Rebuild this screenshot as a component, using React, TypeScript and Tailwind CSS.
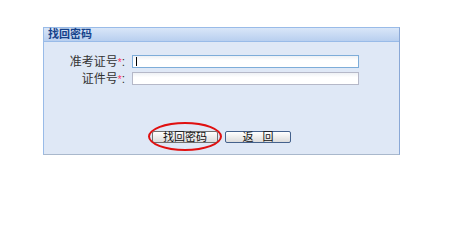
import React from 'react';

const font = { fontFamily: '"Liberation Sans", "Noto Sans CJK SC", sans-serif' };

const Field = ({ label, focused }: { label: string; focused?: boolean }) => (
  <div className="flex items-center h-[13px]">
    <div className="w-[81px] text-right text-[12px] leading-none text-[#333] whitespace-nowrap">
      {label}
      <span className="text-[#ff3366] text-[10px]">*</span>:
    </div>
    <div
      className={`ml-[7px] w-[227px] h-[13px] bg-white bg-gradient-to-b from-[#eef1f5] to-white to-[40%] border ${
        focused ? 'border-[#7eadd9]' : 'border-[#b5b8c8]'
      } flex items-center pl-[3px]`}
    >
      {focused && <span className="w-px h-[9px] bg-black" />}
    </div>
  </div>
);

const Button = ({ children, blue }: { children: React.ReactNode; blue?: boolean }) => (
  <button
    className={`w-[66px] h-[12px] rounded-[2px] border ${
      blue ? 'border-[#44618c]' : 'border-[#707070]'
    } bg-gradient-to-b from-white to-[#dcdcdc] text-[11px] leading-none text-[#111] flex items-center justify-center`}
  >
    {children}
  </button>
);

export default function App() {
  return (
    <div className="bg-white w-[449px] h-[201px] pt-[27px] pl-[43px]" style={font}>
      <div className="w-[357px] h-[128px] border border-[#99bbe8] border-r-[#8aa8d6] border-b-[#a9b8cc] bg-[#dfe8f6] flex flex-col">
        <div className="h-[14px] shrink-0 bg-gradient-to-b from-[#d9e6f8] to-[#b8cfef] border-b border-[#99bbe8] flex items-center pl-[4px]">
          <span className="text-[11px] font-bold leading-none text-[#15428b]">找回密码</span>
        </div>
        <div className="pt-[13px] flex flex-col gap-[4px]">
          <Field label="准考证号" focused />
          <Field label="证件号" />
        </div>
        <div className="mt-[46px] flex justify-center gap-[7px] relative">
          <div className="relative">
            <Button>找回密码</Button>
            <div className="absolute left-[-4px] top-[-9px] w-[74px] h-[29px] rounded-[50%] border-2 border-[#e01010] pointer-events-none" />
          </div>
          <Button blue>返&nbsp;&nbsp;&nbsp;回</Button>
        </div>
      </div>
    </div>
  );
}
